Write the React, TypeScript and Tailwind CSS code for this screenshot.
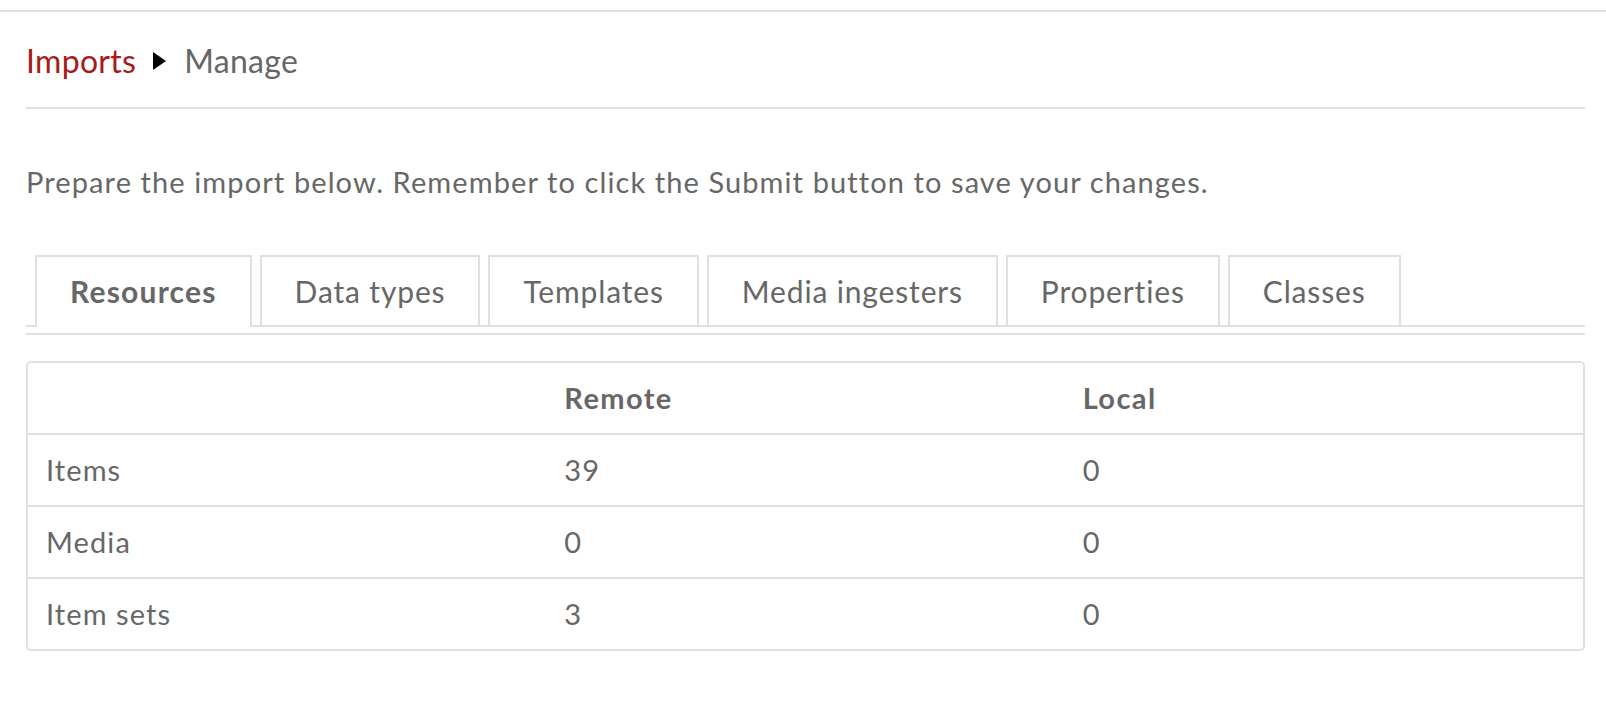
const tabs = ["Resources", "Data types", "Templates", "Media ingesters", "Properties", "Classes"];

const rows = [
  { label: "Items", remote: "39", local: "0" },
  { label: "Media", remote: "0", local: "0" },
  { label: "Item sets", remote: "3", local: "0" },
];

export default function App() {
  return (
    <div
      className="min-h-[722px] bg-white text-[#676767] [font-variant-ligatures:none]"
      style={{ fontFamily: "Lato, 'Open Sans', sans-serif" }}
    >
      <div className="h-[12px] border-b-2 border-[#e0e0e0]" />
      <main className="pl-[26px] pr-[21px]">
        <div className="flex items-center border-b-2 border-[#e0e0e0] pt-[25px] pb-[22px] text-[32px] leading-[48px] tracking-[0.3px]">
          <a className="text-[#a91919]">Imports</a>
          <svg className="ml-[17px] mr-[18px] h-[18px] w-[13px]" viewBox="0 0 13 18">
            <polygon points="0,0 13,9 0,18" fill="#000" />
          </svg>
          <span>Manage</span>
        </div>
        <p className="mt-[53px] text-[29px] leading-[40px] tracking-[1.1px]">
          Prepare the import below. Remember to click the Submit button to save your changes.
        </p>
        <ul className="mt-[53px] flex gap-[8px] border-b-2 border-[#e0e0e0] pl-[9px]">
          {tabs.map((tab, i) => (
            <li
              key={tab}
              className={
                i === 0
                  ? "-mb-[2px] flex h-[72px] items-center border-2 border-b-0 border-[#e0e0e0] bg-white px-[33px] pb-[2px] text-[30px] font-bold tracking-[1.2px]"
                  : "flex h-[70px] items-center border-2 border-b-0 border-[#e0e0e0] px-[33px] text-[30px] tracking-[0.85px]"
              }
            >
              {tab}
            </li>
          ))}
        </ul>
        <div className="mt-[6px] border-t-2 border-[#e0e0e0]" />
        <div className="mt-[26px] overflow-hidden rounded-[5px] border-2 border-[#e0e0e0] text-[29px] tracking-[1.1px]">
          <div className="grid h-[70px] grid-cols-3 items-center font-bold tracking-[1.4px]">
            <div className="pl-[18px]" />
            <div className="pl-[18px]">Remote</div>
            <div className="pl-[18px]">Local</div>
          </div>
          {rows.map((row) => (
            <div key={row.label} className="grid h-[72px] grid-cols-3 items-center border-t-2 border-[#e0e0e0]">
              <div className="pl-[18px]">{row.label}</div>
              <div className="pl-[18px]">{row.remote}</div>
              <div className="pl-[18px]">{row.local}</div>
            </div>
          ))}
        </div>
      </main>
    </div>
  );
}
